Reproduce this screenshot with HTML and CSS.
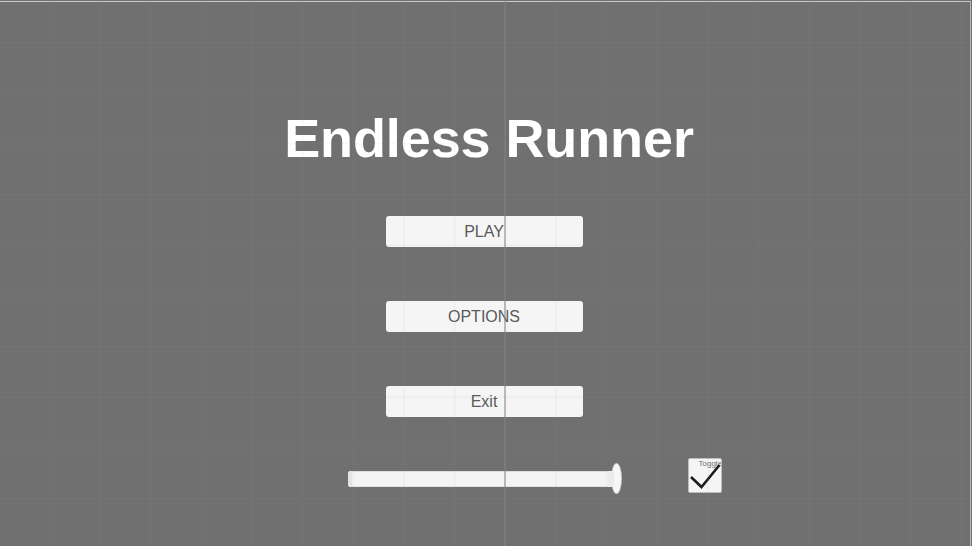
FILE: index.html
```html
<!DOCTYPE html>
<html lang="en">
<head>
<meta charset="utf-8">
<title>Endless Runner</title>
<link rel="stylesheet" href="styles.css">
</head>
<body>
<div class="frame">
  <h1 class="title">Endless Runner</h1>
  <div class="menu">
    <button class="btn">PLAY</button>
    <button class="btn">OPTIONS</button>
    <button class="btn">Exit</button>
  </div>
  <div class="controls">
    <div class="slider">
      <div class="track"><span class="cap"></span><span class="end"></span></div>
      <div class="handle"></div>
    </div>
    <div class="toggle">
      <span class="toggle-label">Toggle</span>
      <svg class="check" viewBox="0 0 34 35" width="34" height="35">
        <path d="M3 19 L13.5 29 L31.5 7" fill="none" stroke="#1e1e1e" stroke-width="2.6" stroke-linejoin="miter"/>
      </svg>
    </div>
  </div>
</div>
<div class="grid"></div>
</body>
</html>
```
FILE: styles.css
```css
html, body {
  margin: 0;
  padding: 0;
  background: #707070;
  overflow: hidden;
}
body {
  width: 972px;
  height: 546px;
  font-family: "Liberation Sans", Arial, sans-serif;
}
.frame {
  box-sizing: border-box;
  width: 971px;
  height: 545px;
  margin-top: 1px;
  border-top: 1px solid #c9c9c9;
  border-right: 1px solid #b4b4b4;
  display: flex;
  flex-direction: column;
  align-items: center;
  padding-right: 2px;
}
.title {
  margin: 109px 0 0 10px;
  font-size: 54px;
  line-height: 54px;
  font-weight: bold;
  color: #ffffff;
  letter-spacing: -0.1px;
}
.menu {
  display: flex;
  flex-direction: column;
  gap: 54px;
  margin-top: 51px;
}
.btn {
  width: 197px;
  height: 31px;
  padding: 1px 0 0;
  border: none;
  border-radius: 3px;
  background: #f5f5f5;
  color: #5a5a5a;
  font-family: "Liberation Sans", Arial, sans-serif;
  font-size: 16px;
  line-height: 30px;
  text-align: center;
}
.controls {
  display: grid;
  grid-template-columns: 1fr auto 1fr;
  align-items: center;
  width: 100%;
  margin-top: 41px;
}
.slider {
  grid-column: 2;
  display: flex;
  align-items: center;
  height: 35px;
  padding-top: 6px;
  box-sizing: border-box;
}
.track {
  position: relative;
  width: 266px;
  height: 16px;
  background: #f4f4f4;
  border-radius: 3px;
  box-shadow: inset 0 1px 0 #dcdcdc, inset 0 -1px 0 #e2e2e2;
}
.cap {
  position: absolute;
  left: 0;
  top: 0;
  bottom: 0;
  width: 4px;
  border-radius: 3px 0 0 3px;
  background: #e4e4e4;
}
.end {
  position: absolute;
  right: 0;
  top: 0;
  bottom: 0;
  width: 6px;
  background: #ebebeb;
}
.handle {
  width: 9px;
  height: 29px;
  margin-left: -2px;
  border-radius: 50%;
  background: #f6f6f6;
  box-shadow: 0 0 0 1px #c8c8c8;
}
.toggle {
  grid-column: 3;
  justify-self: start;
  position: relative;
  width: 34px;
  height: 35px;
  margin-left: 67px;
  box-sizing: border-box;
  background: #f5f5f5;
  border: 1px solid #bdbdbd;
  border-radius: 2px;
  overflow: hidden;
}
.toggle-label {
  position: absolute;
  left: 10px;
  top: 1px;
  font-size: 8px;
  line-height: 8px;
  color: #6e6e6e;
  white-space: nowrap;
}
.check {
  position: absolute;
  left: -1px;
  top: -1px;
}
.grid {
  position: fixed;
  left: 0;
  top: 0;
  width: 972px;
  height: 546px;
  pointer-events: none;
  background-image:
    linear-gradient(to right, transparent 504px, rgba(129,129,129,0.5) 504px, rgba(129,129,129,0.5) 506px, transparent 506px),
    linear-gradient(to right, rgba(150,150,150,0.12) 1px, transparent 1px),
    linear-gradient(to bottom, rgba(150,150,150,0.12) 1px, transparent 1px);
  background-size: 972px 546px, 50.7px 546px, 972px 50.7px;
  background-position: 0 0, 48.7px 0, 0 42px;
  background-repeat: no-repeat, repeat-x, repeat-y;
}
```
